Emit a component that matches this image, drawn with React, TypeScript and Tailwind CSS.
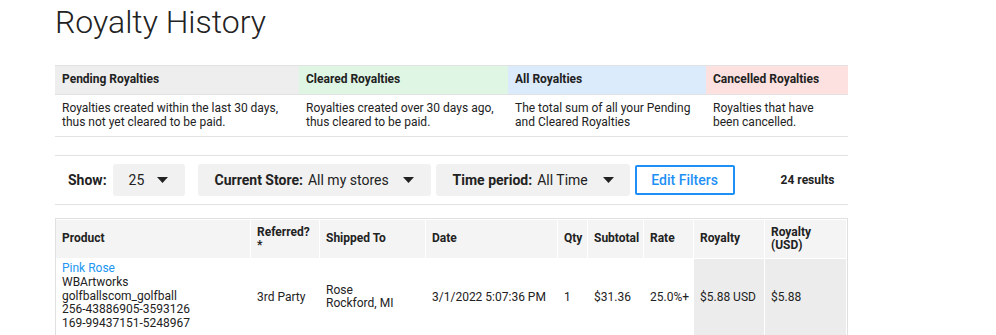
import React from "react";

const Caret = () => (
  <svg width="11" height="6" viewBox="0 0 11 6" className="shrink-0">
    <path d="M0 0 L11 0 L5.5 6 Z" fill="#222" />
  </svg>
);

const summary = [
  { title: "Pending Royalties", desc: ["Royalties created within the last 30 days,", "thus not yet cleared to be paid."], bg: "bg-[#eeeeee]", w: "w-[244px]" },
  { title: "Cleared Royalties", desc: ["Royalties created over 30 days ago,", "thus cleared to be paid."], bg: "bg-[#dff6e5]", w: "w-[209px]" },
  { title: "All Royalties", desc: ["The total sum of all your Pending", "and Cleared Royalties"], bg: "bg-[#dcebfc]", w: "w-[198px]" },
  { title: "Cancelled Royalties", desc: ["Royalties that have", "been cancelled."], bg: "bg-[#fde1e1]", w: "flex-1" },
];

export default function App() {
  return (
    <div className="w-[996px] h-[335px] overflow-hidden bg-white text-[#222]" style={{ fontFamily: "Roboto, 'Liberation Sans', sans-serif" }}>
      <div className="ml-[55px] w-[793px]">
        <h1 className="pt-[2px] text-[32px] font-light leading-[40px] tracking-[0px]">Royalty History</h1>

        {/* summary table */}
        <div className="mt-[23px] border-t border-b border-[#e2e2e2]">
          <div className="flex">
            {summary.map((s) => (
              <div key={s.title} className={`${s.w} ${s.bg} h-[28px] pl-[7px] pb-[3px] flex items-center text-[12px] font-bold`}>
                {s.title}
              </div>
            ))}
          </div>
          <div className="flex border-t border-[#e2e2e2]">
            {summary.map((s) => (
              <div key={s.title} className={`${s.w} pl-[7px] pt-[6px] pb-[7px] text-[12px] leading-[14px]`}>
                {s.desc.map((d) => (
                  <div key={d}>{d}</div>
                ))}
              </div>
            ))}
          </div>
        </div>

        {/* filter bar */}
        <div className="mt-[18px] border-t border-b border-[#e2e2e2] py-[8px] flex items-center">
          <span className="ml-[13px] text-[14px] font-bold">Show:</span>
          <div className="ml-[6px] w-[72px] h-[32px] bg-[#f1f1f1] rounded-[3px] flex items-center pl-[16px] gap-[13px] text-[14px]">
            <span>25</span>
            <Caret />
          </div>
          <div className="ml-[13px] w-[233px] h-[32px] bg-[#f1f1f1] rounded-[3px] flex items-center pl-[17px] text-[14px]">
            <span className="font-bold">Current Store:</span>
            <span className="ml-[5px]">All my stores</span>
            <span className="ml-[14px]"><Caret /></span>
          </div>
          <div className="ml-[5px] w-[194px] h-[32px] bg-[#f1f1f1] rounded-[3px] flex items-center pl-[17px] text-[14px]">
            <span className="font-bold">Time period:</span>
            <span className="ml-[5px]">All Time</span>
            <span className="ml-[15px]"><Caret /></span>
          </div>
          <div className="ml-[5px] w-[100px] h-[30px] border-2 border-[#1e90f5] rounded-[2px] flex items-center justify-center text-[14px] font-medium text-[#1e90f5]">
            Edit Filters
          </div>
          <span className="ml-[46px] text-[12px] font-bold">24 results</span>
        </div>

        {/* data table */}
        <div className="mt-[13px] border border-[#e0e0e0] border-b-0 pt-px">
          <div className="grid grid-cols-[194px_68px_105px_131px_29px_55px_49px_70px_81px] gap-x-px gap-y-px text-[12px]">
            {[
              "Product",
              "Referred?\n*",
              "Shipped To",
              "Date",
              "Qty",
              "Subtotal",
              "Rate",
              "Royalty",
              "Royalty\n(USD)",
            ].map((h) => (
              <div key={h} className="h-[38px] bg-[#f4f4f4] px-[6px] pb-px flex items-center font-bold leading-[13px] whitespace-pre-line">
                {h}
              </div>
            ))}
            <div className="px-[6px] py-[3px] leading-[13.75px] h-[76px]">
              <div className="text-[#2196f3]">Pink Rose</div>
              <div>WBArtworks</div>
              <div>golfballscom_golfball</div>
              <div>256-43886905-3593126</div>
              <div>169-99437151-5248967</div>
            </div>
            <div className="px-[6px] flex items-center">3rd Party</div>
            <div className="px-[6px] flex items-center leading-[13px]">
              <div>
                <div>Rose</div>
                <div>Rockford, MI</div>
              </div>
            </div>
            <div className="px-[6px] flex items-center">3/1/2022 5:07:36 PM</div>
            <div className="px-[6px] flex items-center">1</div>
            <div className="px-[6px] flex items-center">$31.36</div>
            <div className="px-[6px] flex items-center">25.0%+</div>
            <div className="px-[6px] flex items-center bg-[#ececec]">$5.88 USD</div>
            <div className="px-[6px] flex items-center bg-[#ececec]">$5.88</div>
          </div>
        </div>
      </div>
    </div>
  );
}
